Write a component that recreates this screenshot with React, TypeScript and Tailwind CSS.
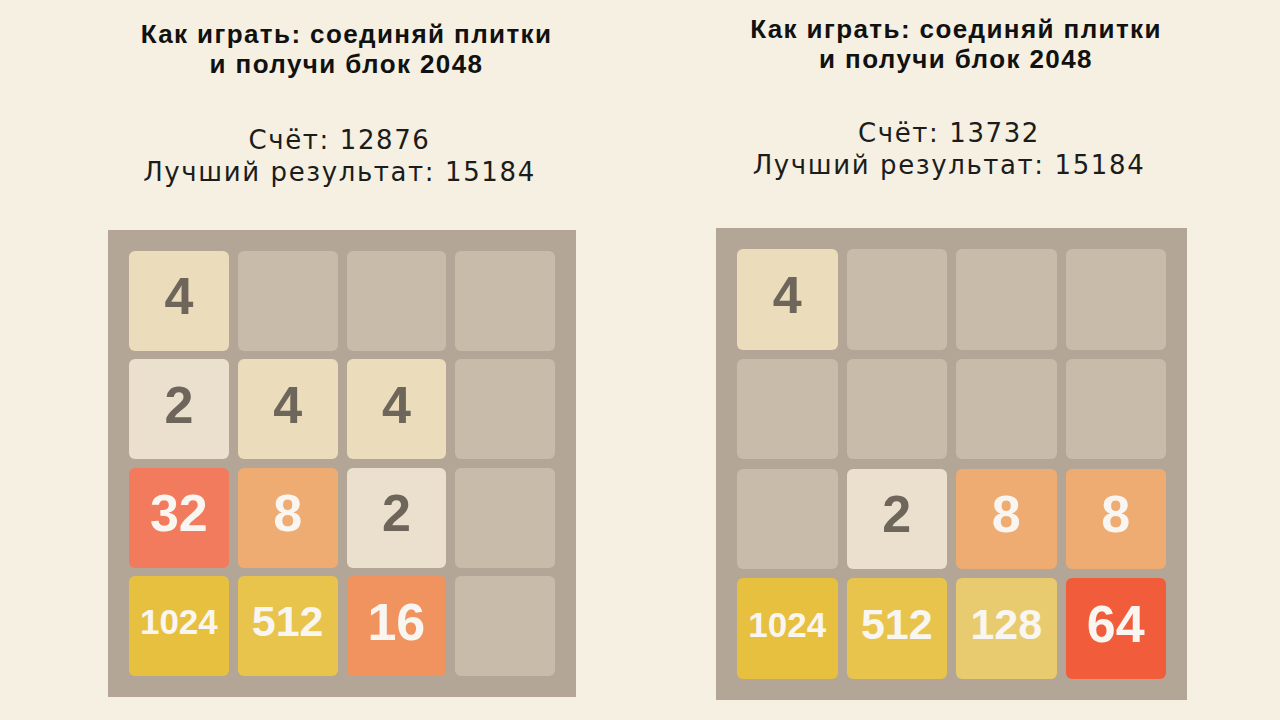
import clsx from "clsx";

type Cell = number | null;

const TILE_BG: Record<number, string> = {
  2: "bg-[#eae0cd] text-[#6e655b]",
  4: "bg-[#ebdcbb] text-[#6e655b]",
  8: "bg-[#eeac72] text-[#f9f6f2]",
  16: "bg-[#f1935f] text-[#f9f6f2]",
  32: "bg-[#f27b5e] text-[#f9f6f2]",
  64: "bg-[#f15d3b] text-[#f9f6f2]",
  128: "bg-[#e8cb6e] text-[#f9f6f2]",
  512: "bg-[#e8c44c] text-[#f9f6f2]",
  1024: "bg-[#e8c03f] text-[#f9f6f2]",
};

function fontFor(v: number) {
  if (v >= 1000) return "text-[35px]";
  if (v >= 100) return "text-[43px]";
  return "text-[52px]";
}

function Tile({ v }: { v: Cell }) {
  if (!v) return <div className="aspect-square rounded-[6px] bg-[#c8bba9]" />;
  return (
    <div
      className={clsx(
        "aspect-square rounded-[6px] flex items-center justify-center pb-[9px] font-bold leading-none",
        TILE_BG[v],
        fontFor(v),
      )}
    >
      {v}
    </div>
  );
}

interface PanelProps {
  score: number;
  best: number;
  cells: Cell[];
  className?: string;
  boardClass: string;
  scoreClass: string;
  gapClass: string;
}

function Panel({ score, best, cells, className, boardClass, scoreClass, gapClass }: PanelProps) {
  return (
    <div className={clsx("flex flex-col items-stretch", className)}>
      <h1 className="pl-[9px] -mx-[20px] text-center text-[26px] leading-[30px] tracking-[1.4px] font-bold text-[#111]">
        Как играть: соединяй плитки
        <br />
        и получи блок 2048
      </h1>
      <div
        className={clsx(
          "pr-[5px] text-center text-[26px] leading-[32px] tracking-[1.6px] text-[#1c1c1c] font-['DejaVu_Sans',sans-serif]",
          scoreClass,
        )}
      >
        <div>Счёт: {score}</div>
        <div>Лучший результат: {best}</div>
      </div>
      <div className={clsx("grid grid-cols-4 bg-[#b4a696] p-[21px]", gapClass, boardClass)}>
        {cells.map((c, i) => (
          <Tile key={i} v={c} />
        ))}
      </div>
    </div>
  );
}

const LEFT: Cell[] = [
  4, null, null, null,
  2, 4, 4, null,
  32, 8, 2, null,
  1024, 512, 16, null,
];

const RIGHT: Cell[] = [
  4, null, null, null,
  null, null, null, null,
  null, 2, 8, 8,
  1024, 512, 128, 64,
];

export default function App() {
  return (
    <div className="w-[1280px] h-[720px] overflow-hidden bg-[#f5f0e1] flex font-['Liberation_Sans',Arial,sans-serif]">
      <Panel
        className="ml-[108px] pt-[19px] w-[468px]"
        score={12876}
        best={15184}
        cells={LEFT}
        scoreClass="mt-[45px]"
        boardClass="mt-[42px] w-[468px] h-[467px]"
        gapClass="gap-x-[9px] gap-y-[8.7px]"
      />
      <Panel
        className="ml-[140px] pt-[14px] w-[471px]"
        score={13732}
        best={15184}
        cells={RIGHT}
        scoreClass="mt-[43px]"
        boardClass="mt-[47px] w-[471px] h-[472px]"
        gapClass="gap-[9px]"
      />
    </div>
  );
}
